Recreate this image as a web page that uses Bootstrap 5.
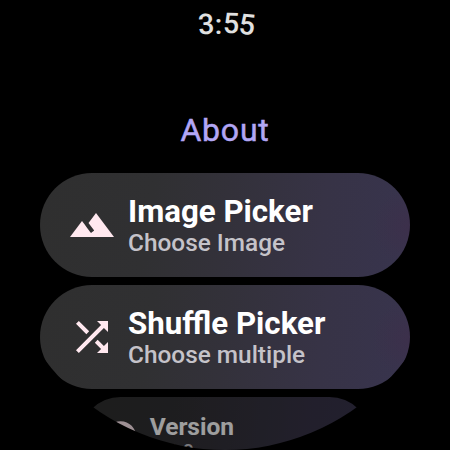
<!DOCTYPE html>
<html lang="en">
<head>
<meta charset="utf-8">
<meta name="viewport" content="width=device-width, initial-scale=1">
<title>About</title>
<link href="https://cdn.jsdelivr.net/npm/bootstrap@5.3.0/dist/css/bootstrap.min.css" rel="stylesheet">
<style>
body{background:#000;font-family:Roboto,sans-serif;}
.watch{width:450px;height:450px;clip-path:circle(225px at 225px 225px);background:#000;}
.clock{height:48px;font-size:28.5px;line-height:50px;font-weight:500;color:#e0e0e0;padding-left:4px;letter-spacing:.3px;}
.clock span{display:inline-block;}
.heading{height:52px;margin-top:56px;margin-bottom:17px;font-size:32px;line-height:52px;font-weight:400;color:#b2a6f5;letter-spacing:.8px;-webkit-text-stroke:.5px #b2a6f5;}
.chip{width:370px;height:104px;border-radius:52px;padding-left:28px;margin-bottom:8px;
background:radial-gradient(circle at 372px 54px,rgba(66,42,72,.45),rgba(66,42,72,0) 40px),linear-gradient(98deg,#2f2f2f 0%,#303032 30%,#33313a 50%,#373346 75%,#38344e 100%);}
.chip svg{width:48px;height:48px;fill:#ffe8ef;margin-right:12px;}
.chip-title{font-size:31.25px;line-height:34px;font-weight:700;color:#fff;padding-top:2px;}
.chip-sub{font-size:24.4px;line-height:28px;font-weight:500;color:#c5c3c9;}
.chip-far{transform:scale(.785);transform-origin:50% 0;opacity:.62;}
.chip-far svg{margin-right:13px;margin-bottom:2px;}
.chip-far .chip-sub{line-height:26px;padding-bottom:2px;padding-left:1px;}
</style>
</head>
<body class="m-0 overflow-hidden">
<main class="watch overflow-hidden d-flex flex-column align-items-center">
<div class="clock flex-shrink-0"><span style="transform:translateY(0) rotate(-4deg)">3</span><span style="transform:translateY(-.5px)">:</span><span style="transform:translateY(-1px) rotate(2deg)">5</span><span style="transform:translateY(.5px) rotate(6deg)">5</span></div>
<h1 class="heading flex-shrink-0">About</h1>
<div class="chip flex-shrink-0 d-flex align-items-center">
<svg viewBox="0 0 24 24"><path d="M14 6l-3.75 5 2.85 3.8-1.6 1.2C9.81 13.75 7 10 7 10l-6 8h22L14 6z"/></svg>
<div class="text-nowrap"><div class="chip-title">Image Picker</div><div class="chip-sub">Choose Image</div></div>
</div>
<div class="chip flex-shrink-0 d-flex align-items-center">
<svg viewBox="0 0 24 24"><path d="M10.59 9.17L5.41 4 4 5.41l5.17 5.17 1.42-1.41zM14.5 4l2.04 2.04L4 18.59 5.41 20 17.96 7.46 20 9.5V4h-5.5zm.33 9.41l-1.41 1.41 3.13 3.13L14.5 20H20v-5.5l-2.04 2.04-3.13-3.13z"/></svg>
<div class="text-nowrap"><div class="chip-title">Shuffle Picker</div><div class="chip-sub">Choose multiple</div></div>
</div>
<div class="chip chip-far flex-shrink-0 d-flex align-items-center">
<svg viewBox="0 0 24 24"><path d="M12 2C6.48 2 2 6.48 2 12s4.48 10 10 10 10-4.48 10-10S17.52 2 12 2zm1 15h-2v-6h2v6zm0-8h-2V7h2v2z"/></svg>
<div class="text-nowrap"><div class="chip-title">Version</div><div class="chip-sub">1.3.0</div></div>
</div>
</main>
<script src="https://cdn.jsdelivr.net/npm/bootstrap@5.3.0/dist/js/bootstrap.bundle.min.js"></script>
</body>
</html>
